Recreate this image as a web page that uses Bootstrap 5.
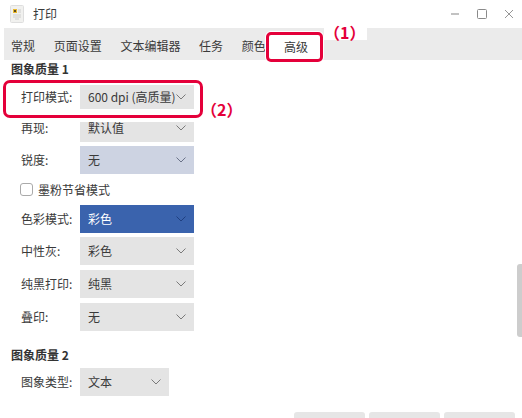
<!DOCTYPE html>
<html lang="zh-CN">
<head>
  <meta charset="UTF-8">
  <title>打印</title>
  <link href="https://cdn.jsdelivr.net/npm/bootstrap@5.3.0/dist/css/bootstrap.min.css" rel="stylesheet">
  <style>
    html, body { height: 100%; background: #fff; }
    body { font-family: "Noto Sans CJK SC", "Noto Sans", sans-serif; font-size: 12px; color: #3a3a3a; overflow: hidden; }
    .print-window { width: 522px; height: 418px; overflow: hidden; }
    .title-bar { height: 28px; padding-left: 10px; }
    .title-bar .doc-icon { width: 14px; height: 18px; margin-right: 9px; }
    .win-buttons { gap: 17px; padding-right: 8px; }
    .tab-bar { height: 32px; margin-left: 4px; background: #ebebeb; padding-left: 7px; gap: 18.7px; align-items: center; flex-wrap: nowrap; }
    .tab-bar .nav-link { padding: 0; color: #3a3a3a; font-size: 12px; line-height: 18px; margin-top: 4px; }
    .tab-bar .nav-link.active-tab { margin-left: -18.5px; margin-top: 6px; padding: 3px 12px 3px 15px; height: 30px; border: 3px solid #e4003a; border-radius: 5px; background: #fff; box-shadow: 0 0 0 1px #fff; }
    .note-mark { font-weight: 700; font-size: 16px; color: #e4003a; line-height: 16px; white-space: nowrap; }
    .note-one { left: 320px; top: -4px; padding-right: 2px; background: #fff; }
    .note-two { left: 100%; top: 18px; margin-left: 1px; }
    .group-title { font-weight: 700; line-height: 20px; height: 20px; padding-left: 11px; color: #333; margin-top: -1px; }
    .form-rows { gap: 4.7px; padding-left: 21px; margin-top: 1px; }
    .print-row { height: 28px; }
    .row-label { width: 59px; flex: none; }
    .drop-field { width: 114px; height: 28px; padding: 0 8px 0 8px; background: #e4e4e4; flex: none; }
    .drop-field svg { width: 10px; height: 6px; flex: none; }
    .drop-field.narrow { width: 89px; }
    .drop-field.tinted { background: #cdd3e2; }
    .drop-field.picked { background: #3a63ad; color: #fff; }
    .marked-row { height: auto; align-self: flex-start; margin: 0 0 -9px -18px; padding: 2px 6px 6px 15px; border: 3px solid #e4003a; border-radius: 7px; background: #fff; box-shadow: 0 0 0 4px #fff; z-index: 2; }
    .marked-row .drop-field { height: 24px; }
    .toner-row { height: 21px; min-height: 0; margin-bottom: 0; padding-left: 0; margin-left: -1px; }
    .toner-row .form-check-input { width: 13px; height: 13px; margin: 0 5px 0 0; border-color: #aaa; border-radius: 3px; }
    .second-group { margin-top: 14.5px; margin-bottom: 2.5px; }
    .scroll-thumb { right: 0; top: 264px; width: 5px; height: 73px; background: #cdcdcd; border-radius: 3px 0 0 3px; }
    .foot-buttons { right: 7px; top: 412px; gap: 4px; }
    .foot-buttons .btn { width: 71px; height: 30px; background: #e6e6e6; border: 0; border-radius: 3px; }
  </style>
</head>
<body>
  <div class="print-window position-relative">
    <div class="title-bar d-flex align-items-center">
      <svg class="doc-icon" viewBox="0 0 14 18">
        <rect x="0.5" y="0.5" width="13" height="17" rx="1" fill="#f1f1ef" stroke="#dedede"/>
        <rect x="3" y="4" width="4" height="4" fill="#e9b92e"/>
        <rect x="4" y="5" width="2" height="2" fill="#5a4a20"/>
        <path d="M8 5h3M8 7h3M3 10h8M3 12h8M5 14h4" stroke="#c6c6c6" stroke-width="0.8"/>
      </svg>
      <span>打印</span>
      <div class="win-buttons d-flex align-items-center ms-auto">
        <svg width="10" height="10" viewBox="0 0 10 10"><path d="M1 5h8" stroke="#9a9a9a" stroke-width="1.2"/></svg>
        <svg width="10" height="10" viewBox="0 0 10 10"><rect x="0.5" y="0.5" width="9" height="9" rx="1" fill="none" stroke="#8a8a8a"/></svg>
        <svg width="10" height="10" viewBox="0 0 10 10"><path d="M1 1l8 8M9 1l-8 8" stroke="#8a8a8a" stroke-width="0.9"/></svg>
      </div>
    </div>

    <ul class="nav tab-bar position-relative">
      <li class="nav-item"><a class="nav-link" href="#">常规</a></li>
      <li class="nav-item"><a class="nav-link" href="#">页面设置</a></li>
      <li class="nav-item"><a class="nav-link" href="#">文本编辑器</a></li>
      <li class="nav-item"><a class="nav-link" href="#">任务</a></li>
      <li class="nav-item"><a class="nav-link" href="#">颜色</a></li>
      <li class="nav-item"><a class="nav-link active-tab" href="#">高级</a></li>
      <li class="note-mark note-one position-absolute">（1）</li>
    </ul>

    <div class="group-title">图象质量 1</div>
    <div class="form-rows d-flex flex-column">
      <div class="print-row marked-row d-flex align-items-center position-relative">
        <span class="row-label">打印模式:</span>
        <div class="drop-field d-flex align-items-center justify-content-between">
          <span class="text-nowrap">600 dpi (高质量)</span>
          <svg viewBox="0 0 10 6"><path d="M0.5 0.5L5 5l4.5-4.5" fill="none" stroke="#7a7a7a"/></svg>
        </div>
        <span class="note-mark note-two position-absolute">（2）</span>
      </div>
      <div class="print-row d-flex align-items-center">
        <span class="row-label">再现:</span>
        <div class="drop-field d-flex align-items-center justify-content-between">
          <span>默认值</span>
          <svg viewBox="0 0 10 6"><path d="M0.5 0.5L5 5l4.5-4.5" fill="none" stroke="#7a7a7a"/></svg>
        </div>
      </div>
      <div class="print-row d-flex align-items-center">
        <span class="row-label">锐度:</span>
        <div class="drop-field tinted d-flex align-items-center justify-content-between">
          <span>无</span>
          <svg viewBox="0 0 10 6"><path d="M0.5 0.5L5 5l4.5-4.5" fill="none" stroke="#6a7288"/></svg>
        </div>
      </div>
      <div class="toner-row form-check d-flex align-items-center">
        <input class="form-check-input" type="checkbox" id="tonerSave">
        <label class="form-check-label" for="tonerSave">墨粉节省模式</label>
      </div>
      <div class="print-row d-flex align-items-center">
        <span class="row-label">色彩模式:</span>
        <div class="drop-field picked d-flex align-items-center justify-content-between">
          <span>彩色</span>
          <svg viewBox="0 0 10 6"><path d="M0.5 0.5L5 5l4.5-4.5" fill="none" stroke="#1f3f80"/></svg>
        </div>
      </div>
      <div class="print-row d-flex align-items-center">
        <span class="row-label">中性灰:</span>
        <div class="drop-field d-flex align-items-center justify-content-between">
          <span>彩色</span>
          <svg viewBox="0 0 10 6"><path d="M0.5 0.5L5 5l4.5-4.5" fill="none" stroke="#7a7a7a"/></svg>
        </div>
      </div>
      <div class="print-row d-flex align-items-center">
        <span class="row-label">纯黑打印:</span>
        <div class="drop-field d-flex align-items-center justify-content-between">
          <span>纯黑</span>
          <svg viewBox="0 0 10 6"><path d="M0.5 0.5L5 5l4.5-4.5" fill="none" stroke="#7a7a7a"/></svg>
        </div>
      </div>
      <div class="print-row d-flex align-items-center">
        <span class="row-label">叠印:</span>
        <div class="drop-field d-flex align-items-center justify-content-between">
          <span>无</span>
          <svg viewBox="0 0 10 6"><path d="M0.5 0.5L5 5l4.5-4.5" fill="none" stroke="#7a7a7a"/></svg>
        </div>
      </div>
    </div>

    <div class="group-title second-group">图象质量 2</div>
    <div class="form-rows d-flex flex-column mt-0">
      <div class="print-row d-flex align-items-center">
        <span class="row-label">图象类型:</span>
        <div class="drop-field narrow d-flex align-items-center justify-content-between">
          <span>文本</span>
          <svg viewBox="0 0 10 6"><path d="M0.5 0.5L5 5l4.5-4.5" fill="none" stroke="#7a7a7a"/></svg>
        </div>
      </div>
    </div>

    <div class="scroll-thumb position-absolute"></div>
    <div class="foot-buttons d-flex position-absolute">
      <button class="btn" type="button"></button>
      <button class="btn" type="button"></button>
      <button class="btn" type="button"></button>
    </div>
  </div>
  <script src="https://cdn.jsdelivr.net/npm/bootstrap@5.3.0/dist/js/bootstrap.bundle.min.js"></script>
</body>
</html>
